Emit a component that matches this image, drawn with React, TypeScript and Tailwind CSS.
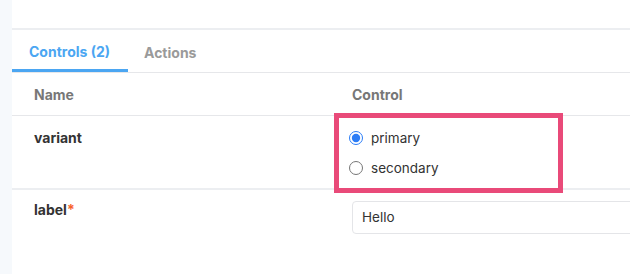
export default function App() {
  return (
    <div className="relative flex h-[274px] w-[630px] overflow-hidden bg-white font-['Inter',sans-serif]">
      <div className="w-[12px] shrink-0 bg-[#f6f9fc]" />

      <div className="flex min-w-0 flex-1 flex-col">
        <div className="h-[30px] shrink-0 border-b-2 border-[#eceef1]" />

        {/* tabs */}
        <div className="flex h-[43px] shrink-0 items-stretch border-b border-[#e6e7ea]">
          <div className="flex w-[116px] shrink-0 items-center border-b-[3px] border-[#4ba6f2] pl-[17px] pt-[3px] text-[14px] font-bold text-[#4ba6f2]">
            Controls (2)
          </div>
          <div className="flex items-center pl-[16px] pt-[3px] text-[14px] font-bold text-[#9a9a9a]">
            Actions
          </div>
        </div>

        {/* header */}
        <div className="flex h-[43px] shrink-0 items-center border-b border-[#e6e7ea] text-[14px] font-bold text-[#777]">
          <div className="w-[318px] shrink-0 pl-[22px]">Name</div>
          <div className="pl-[22px]">Control</div>
        </div>

        {/* variant row */}
        <div className="flex h-[74px] shrink-0 border-b-2 border-[#eceef1]">
          <div className="w-[318px] shrink-0 pl-[22px] pt-[14px] text-[14px] font-bold leading-[16px] text-[#333]">
            variant
          </div>
          <div className="flex flex-col gap-[12px] pl-[19px] pt-[13px] text-[13.5px] leading-[18px] text-[#333]">
            <label className="flex items-center gap-[8px]">
              <input type="radio" name="variant" defaultChecked className="m-0 h-[14px] w-[14px] accent-[#2b7cf6]" />
              primary
            </label>
            <label className="flex items-center gap-[8px]">
              <input type="radio" name="variant" className="m-0 h-[14px] w-[14px]" />
              secondary
            </label>
          </div>
        </div>

        {/* label row */}
        <div className="flex flex-1">
          <div className="w-[318px] shrink-0 pl-[22px] pt-[12px] text-[14px] font-bold leading-[16px] text-[#333]">
            label<span className="text-[#f7612c]">*</span>
          </div>
          <div className="shrink-0 pl-[22px] pt-[11px]">
            <div className="flex h-[33px] w-[300px] items-center rounded-[4px] border border-[#e4e5e8] pl-[9px] text-[13.5px] text-[#333]">
              Hello
            </div>
          </div>
        </div>
      </div>

      <div className="pointer-events-none absolute left-[334px] top-[113px] h-[80px] w-[229px] border-[5px] border-[#e94a79]" />
    </div>
  );
}
